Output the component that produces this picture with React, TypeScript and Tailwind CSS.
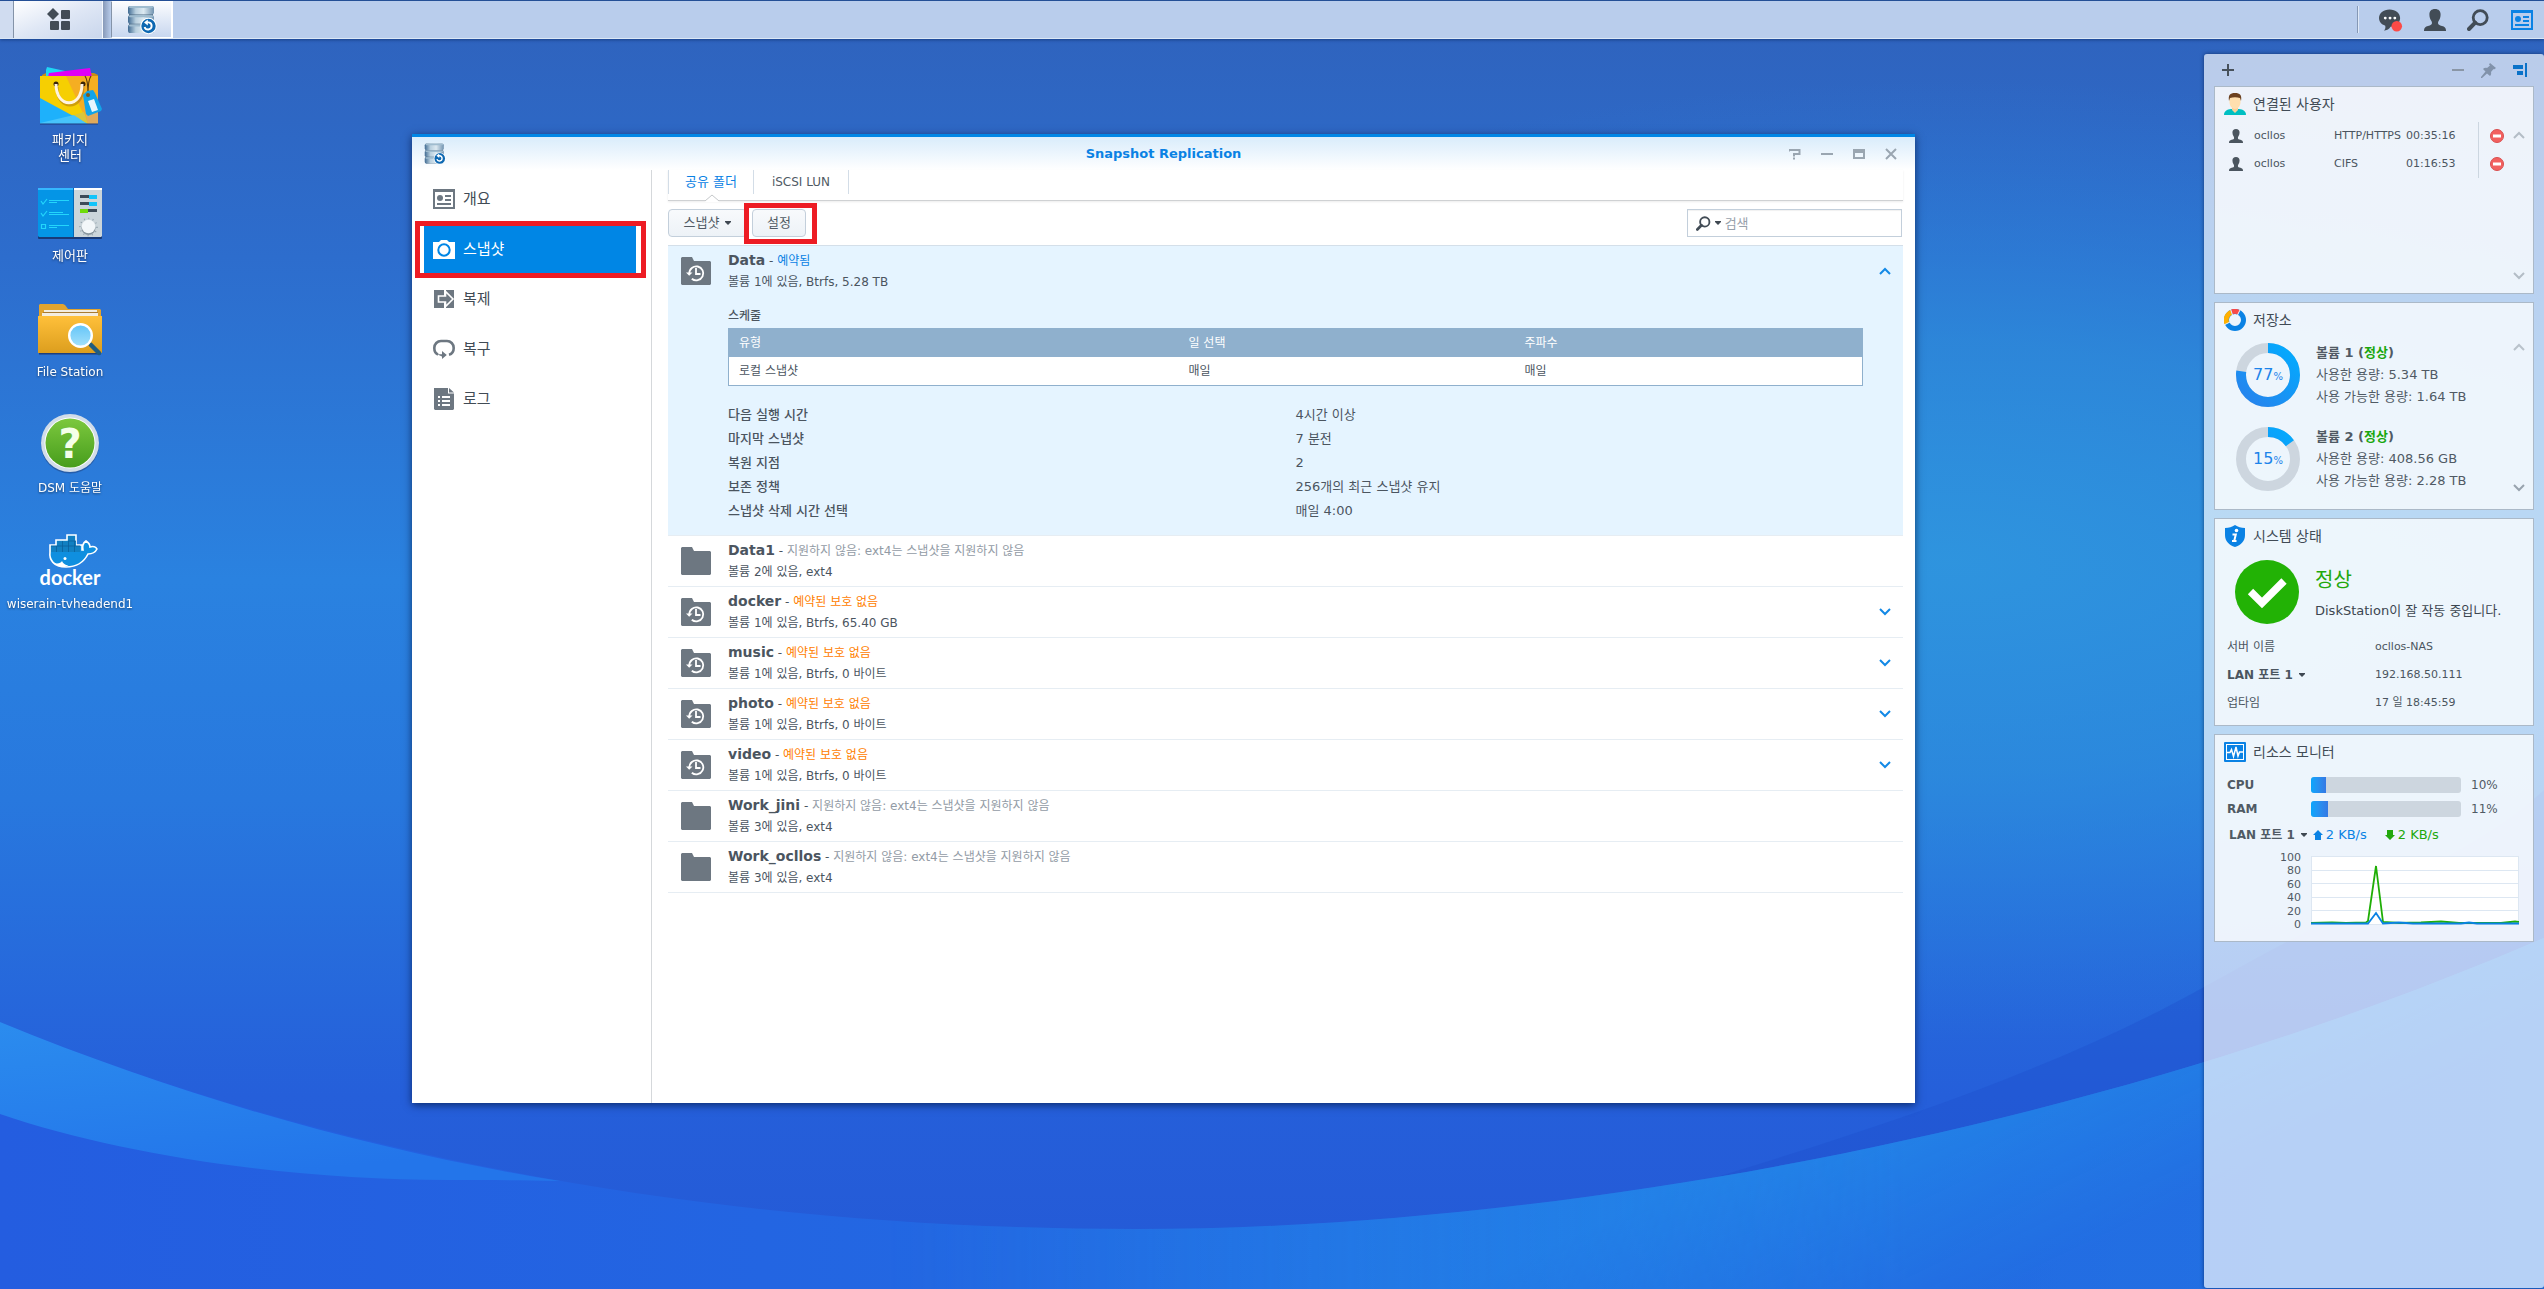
import React from "react";

type Row = {
  name: string;
  status: string;
  tone: "warn" | "muted";
  sub: string;
  snapshot: boolean;
};

const rows: Row[] = [
  { name: "Data1", status: "지원하지 않음: ext4는 스냅샷을 지원하지 않음", tone: "muted", sub: "볼륨 2에 있음, ext4", snapshot: false },
  { name: "docker", status: "예약된 보호 없음", tone: "warn", sub: "볼륨 1에 있음, Btrfs, 65.40 GB", snapshot: true },
  { name: "music", status: "예약된 보호 없음", tone: "warn", sub: "볼륨 1에 있음, Btrfs, 0 바이트", snapshot: true },
  { name: "photo", status: "예약된 보호 없음", tone: "warn", sub: "볼륨 1에 있음, Btrfs, 0 바이트", snapshot: true },
  { name: "video", status: "예약된 보호 없음", tone: "warn", sub: "볼륨 1에 있음, Btrfs, 0 바이트", snapshot: true },
  { name: "Work_jini", status: "지원하지 않음: ext4는 스냅샷을 지원하지 않음", tone: "muted", sub: "볼륨 3에 있음, ext4", snapshot: false },
  { name: "Work_ocllos", status: "지원하지 않음: ext4는 스냅샷을 지원하지 않음", tone: "muted", sub: "볼륨 3에 있음, ext4", snapshot: false },
];

const details = [
  ["다음 실행 시간", "4시간 이상"],
  ["마지막 스냅샷", "7 분전"],
  ["복원 지점", "2"],
  ["보존 정책", "256개의 최근 스냅샷 유지"],
  ["스냅샷 삭제 시간 선택", "매일 4:00"],
];

/* ---------- Wallpaper ---------- */

function Wallpaper() {
  return (
    <svg className="absolute inset-0 h-full w-full" viewBox="0 0 2544 1289" preserveAspectRatio="none" aria-hidden="true">
      <defs>
        <linearGradient id="sky" x1="0" y1="0" x2="0" y2="1">
          <stop offset="0" stopColor="#2f62bc" />
          <stop offset="0.2" stopColor="#2d6dcd" />
          <stop offset="0.45" stopColor="#2a82e0" />
          <stop offset="0.62" stopColor="#2878de" />
          <stop offset="0.85" stopColor="#255fda" />
          <stop offset="1" stopColor="#2459d6" />
        </linearGradient>
        <radialGradient id="glow" gradientUnits="userSpaceOnUse" cx="0" cy="0" r="1" gradientTransform="translate(1950 560) scale(1100 480)">
          <stop offset="0" stopColor="#2f96de" stopOpacity="0.9" />
          <stop offset="0.45" stopColor="#2d90dc" stopOpacity="0.65" />
          <stop offset="1" stopColor="#2a80de" stopOpacity="0" />
        </radialGradient>
        <linearGradient id="ground" x1="0" y1="0" x2="1" y2="0">
          <stop offset="0" stopColor="#245de0" />
          <stop offset="0.3" stopColor="#2365e2" />
          <stop offset="0.75" stopColor="#2273e4" />
          <stop offset="1" stopColor="#2688e8" />
        </linearGradient>
        <linearGradient id="groundFade" gradientUnits="userSpaceOnUse" x1="1900" y1="1080" x2="2000" y2="1289">
          <stop offset="0" stopColor="#2390ea" stopOpacity="0.7" />
          <stop offset="1" stopColor="#2266e0" stopOpacity="0.6" />
        </linearGradient>
        <linearGradient id="groundMask" x1="0" y1="0" x2="1" y2="0">
          <stop offset="0.35" stopColor="#000" />
          <stop offset="0.75" stopColor="#fff" />
        </linearGradient>
        <mask id="rightOnly">
          <rect width="2544" height="1289" fill="url(#groundMask)" />
        </mask>
        <linearGradient id="swoosh" x1="0" y1="0" x2="0.35" y2="1">
          <stop offset="0" stopColor="#2b8cee" />
          <stop offset="1" stopColor="#2375ea" />
        </linearGradient>
      </defs>
      <rect width="2544" height="1289" fill="url(#sky)" />
      <rect width="2544" height="1289" fill="url(#glow)" />
      <path d="M1500 1240 C1780 1160 2020 1090 2204 987 S2480 850 2544 790 V1289 H1500Z" fill="#1f50cc" fillOpacity="0.4" />
      <path d="M0 1022 C350 1165 740 1229 1136 1229 C1560 1229 2100 1130 2544 938 V1289 H0Z" fill="url(#ground)" />
      <path d="M0 1022 C350 1165 740 1229 1136 1229 C1560 1229 2100 1130 2544 938 V1289 H0Z" fill="url(#groundFade)" mask="url(#rightOnly)" />
      <path d="M0 1022 C190 1100 380 1152 560 1181 C520 1180 490 1180 450 1180 C290 1180 120 1155 0 1114Z" fill="url(#swoosh)" />
    </svg>
  );
}

/* ---------- Icons ---------- */

function SnapshotAppIcon({ className }: { className: string }) {
  return (
    <svg viewBox="0 0 30 30" className={className} aria-hidden="true">
      <defs>
        <linearGradient id="dbBody" x1="0" y1="0" x2="1" y2="0">
          <stop offset="0" stopColor="#3f6a92" />
          <stop offset="0.3" stopColor="#b9d0df" />
          <stop offset="0.6" stopColor="#dce9f1" />
          <stop offset="1" stopColor="#7193b0" />
        </linearGradient>
      </defs>
      <rect x="2" y="1" width="24" height="27" rx="1" fill="#4a6780" />
      {[1, 10.2, 19.4].map((y) => (
        <g key={y}>
          <rect x="1" y={y} width="26" height="8.600" rx="2" fill="url(#dbBody)" />
          <rect x="2" y={y} width="24" height="2" rx="1" fill="#9fbccf" />
        </g>
      ))}
      <circle cx="21.500" cy="21" r="8.200" fill="#fff" />
      <circle cx="21.500" cy="21" r="7.200" fill="#0d68b2" />
      <path d="M20 17.400h1.800a3.600 3.600 0 1 1-4.200 4.600" fill="none" stroke="#fff" strokeWidth="1.900" />
      <path d="M20.800 14.400v6L17 17.400z" fill="#fff" />
    </svg>
  );
}

function UserGlyph({ className }: { className: string }) {
  return (
    <svg viewBox="0 0 22 22" className={className} aria-hidden="true">
      <path d="M11 0c3.700 0 5.600 2.200 5.600 5.400 0 2.200-.6 4.400-1.700 6.100-.6 1-.9 1.700-.9 2.500 0 1.700 1.300 2.300 4 3 2.500.7 4 1.600 4 4.500V22H0v-.5c0-2.900 1.500-3.800 4-4.500 2.700-.7 4-1.300 4-3 0-.8-.3-1.500-.9-2.500C6 9.800 5.400 7.600 5.400 5.400 5.400 2.200 7.300 0 11 0z" fill="currentColor" />
    </svg>
  );
}

function SearchGlyph({ className }: { className: string }) {
  return (
    <svg viewBox="0 0 22 22" className={className} aria-hidden="true">
      <circle cx="13.200" cy="8.600" r="7" fill="none" stroke="currentColor" strokeWidth="2.800" />
      <path d="M8.200 13.700 2 20" stroke="currentColor" strokeWidth="4" strokeLinecap="round" />
    </svg>
  );
}

function CardGlyph({ className }: { className: string }) {
  return (
    <svg viewBox="0 0 22 20" className={className} aria-hidden="true">
      <path fillRule="evenodd" d="M0 0h22v20H0zM2 3v15h18V3z" fill="currentColor" />
      <circle cx="7" cy="9" r="3" fill="currentColor" />
      <path d="M12 6h6v2h-6zM12 10h6v2h-6zM4 14h14v2H4z" fill="currentColor" />
    </svg>
  );
}

function Caret() {
  return (
    <svg viewBox="0 0 6 4" className="h-1 w-1.5 shrink-0" aria-hidden="true">
      <path d="M0 0h6v1L3 4 0 1z" fill="#3f4852" />
    </svg>
  );
}

function Chevron({ up, className }: { up?: boolean; className: string }) {
  return (
    <svg viewBox="0 0 12 8" className={className} aria-hidden="true">
      <path d={up ? "M1 7 6 2l5 5" : "M1 1l5 5 5-5"} fill="none" stroke="currentColor" strokeWidth="2" />
    </svg>
  );
}

function FolderGlyph({ snapshot }: { snapshot: boolean }) {
  return (
    <svg viewBox="0 0 30 28" className="mt-[11px] h-7 w-[30px] shrink-0" aria-hidden="true">
      <path d="M1 0h10l2 4h16l1 1v22l-1 1H1l-1-1V1z" fill="#6d7781" />
      {snapshot && (
        <g fill="none" stroke="#fff" strokeWidth="1.800">
          <path d="M8.300 16.500a7 7 0 1 1 2.500 5.200" />
          <path d="M15 11v6h4.500" />
          <path d="M5 15.500h6.500L8.200 18.700z" fill="#fff" stroke="none" />
        </g>
      )}
    </svg>
  );
}

function BagIcon() {
  return (
    <svg viewBox="0 0 64 64" className="h-16 w-16" aria-hidden="true">
      <path d="M4 9l4-2h48l4 2v3H4z" fill="#c98d16" />
      <path d="M8 4 9 1l18 4v7H8z" fill="#1fd6f5" />
      <path d="M11 7 52 2l2 9H10z" fill="#e000f5" />
      <path d="M2 10h58v48H2z" fill="#f6cf02" />
      <path d="M28 10h32v48H50z" fill="#f5ae22" />
      <path d="M2 32l48 26H2z" fill="#1eb1fb" />
      <path d="M2 57l34-8 14 9H2z" fill="#47c4fb" />
      <path d="M36 49l10-3 4 12z" fill="#d8c63c" />
      <path d="M46 40l14-8v26H50z" fill="#e0aa5c" />
      <circle cx="18" cy="18" r="2.500" fill="#3a2408" />
      <circle cx="45" cy="18" r="2.500" fill="#3a2408" />
      <path d="M18 19c0 24 26 24 26 0" fill="none" stroke="#a5700e" strokeWidth="3" strokeOpacity="0.500" transform="translate(1 2)" />
      <path d="M18 18c0 25 26 25 26 0" fill="none" stroke="#fff3e0" strokeWidth="3" />
      <path d="M47 10c3 4 3 12 3 18M53 10c-3 4-3 12-3 18" fill="none" stroke="#5b3d0c" strokeWidth="1.200" />
      <path d="M45 29l4-4 6-1 2 3 7 16-1 2-13 5-2-2z" fill="#12a4e8" />
      <circle cx="50" cy="29" r="2" fill="#7d5a1c" />
      <path d="M50 35l6-2 4 11-6 2z" fill="#fff" fillOpacity="0.900" />
      <path d="M2 58h58" stroke="#1c3d80" strokeWidth="1" />
    </svg>
  );
}

function ControlPanelIcon() {
  return (
    <svg viewBox="0 0 64 64" className="h-16 w-16" aria-hidden="true">
      <rect x="0" y="6" width="64" height="51" rx="1" fill="#183a78" />
      <path d="M0 6h36v49H1l-1-1z" fill="#0495e6" />
      <path d="M0 6h36v2H0z" fill="#35b7ff" />
      <path d="M36 6h28v48l-1 1H36z" fill="#cbd5da" />
      <path d="M36 6h28v2H36z" fill="#fff" />
      <path d="M35 6h1v49h-1z" fill="#0468b8" />
      <g fill="none" stroke="#23d5fb" strokeWidth="1.200">
        <path d="M3 19l2 3 4-5M3 31l2 3 4-5M3.500 42.500h4v4h-4zM11 18.500h20M11 20.500h8M11 30.500h14M11 32.500h20M11 43.500h20M11 45.500h8" />
      </g>
      <path d="M42 13h10v3H42zM42 20h10v3H42zM50 27h9v3h-9z" fill="#3d4b58" />
      <path d="M51 13h8v4h-8zM51 20h8v4h-8z" fill="#12c4fa" />
      <path d="M42 27h8v4h-8z" fill="#6edc0a" />
      <circle cx="50.500" cy="45" r="8.500" fill="none" stroke="#94a2ac" strokeWidth="1.500" strokeDasharray="1 3.400" />
      <circle cx="50.500" cy="46" r="7" fill="#8a979f" />
      <circle cx="50.500" cy="44.500" r="6.800" fill="#f3f7f9" />
    </svg>
  );
}

function FileStationIcon() {
  return (
    <svg viewBox="0 0 64 64" className="h-16 w-16" aria-hidden="true">
      <defs>
        <linearGradient id="folderFront" x1="0" y1="0" x2="0" y2="1">
          <stop offset="0" stopColor="#ffc03a" />
          <stop offset="1" stopColor="#dc9e1e" />
        </linearGradient>
        <linearGradient id="lens" x1="0" y1="0" x2="0" y2="1">
          <stop offset="0" stopColor="#62c4f8" />
          <stop offset="1" stopColor="#a4e1fb" />
        </linearGradient>
      </defs>
      <path d="M1 7l1-1h23l2 1 3 4h32l1 1v12H1z" fill="#e2a42e" />
      <path d="M6 12h53v2H6zM4 15h56v3H4z" fill="#f3ecdf" />
      <path d="M5 14h55v1H5z" fill="#a77b33" />
      <path d="M0 18h64v37H0z" fill="url(#folderFront)" />
      <path d="M1 55h62v1.500H1z" fill="#1e3f7c" />
      <path d="M53 47l8 8" stroke="#205c80" strokeWidth="4.500" strokeLinecap="round" />
      <circle cx="42.500" cy="37.500" r="11.300" fill="url(#lens)" stroke="#fff" strokeWidth="2.400" />
    </svg>
  );
}

function HelpIcon() {
  return (
    <svg viewBox="0 0 64 64" className="h-16 w-16" aria-hidden="true">
      <defs>
        <linearGradient id="helpFill" x1="0" y1="0" x2="0" y2="1">
          <stop offset="0" stopColor="#7cc83e" />
          <stop offset="1" stopColor="#479d1c" />
        </linearGradient>
      </defs>
      <circle cx="32" cy="30.500" r="29" fill="#1f3f7a" fillOpacity="0.500" />
      <circle cx="32" cy="29" r="29" fill="#d2dde9" />
      <circle cx="32" cy="29" r="25.500" fill="#fff" />
      <circle cx="32" cy="29" r="24.500" fill="url(#helpFill)" />
      <text x="32" y="44" textAnchor="middle" fontSize="40" fontWeight="700" fill="#f4ffe9" className="font-['DejaVu_Sans',sans-serif]">?</text>
    </svg>
  );
}

function DockerIcon() {
  return (
    <svg viewBox="0 0 64 64" className="h-16 w-16" aria-hidden="true">
      <path d="M12 22v-7h6v-5h11V5h9v10h6v5h1c-1-4 0-7 3-9 3 2 4 4 4 6 3-1 6 0 7 2-2 4-5 5-9 5-4 8-11 13-22 13-13 0-17-8-16-15z" fill="#0f8fdf" stroke="#fff" strokeWidth="1.600" />
      <path d="M13 16h29v6H13zM19 11h19v6H19zM30 6h7v6h-7z" fill="#1180c2" />
      <path d="M18.500 16v6M24.500 11v11M30.500 11v11M36.500 11v11M13 16h29M30 11h8" stroke="#0a619c" strokeWidth="0.800" />
      <circle cx="27" cy="28.500" r="1.500" fill="#fff" />
      <path d="M16 33c4 1 7 0 8-2 1 3 5 5 7 4-4 3-11 3-15-2z" fill="#fff" />
      <text x="32" y="55" textAnchor="middle" fontSize="20" fontWeight="700" fill="#fff" className="font-['Lato',sans-serif]">docker</text>
    </svg>
  );
}

/* ---------- Taskbar ---------- */

function Taskbar() {
  return (
    <header className="relative flex h-[39px] shrink-0 items-stretch border-t border-[#244f96] border-b border-b-[#dbe7f5] bg-[#b9cdec] text-[#424c56] shadow-[0_1px_3px_rgba(10,40,100,0.6)]">
      <div className="w-[13px] bg-[#d0dcf0]" />
      <button aria-label="주 메뉴" className="flex w-[90px] items-center justify-center border-x border-l-[#8493a8] border-r-[#f4f8fd] bg-gradient-to-br from-white via-[#dfe7f5] to-[#c9d6ec]">
        <svg viewBox="0 0 23 23" className="h-[23px] w-[23px]" aria-hidden="true">
          <path d="M6 0 12 6 6 12 0 6z" fill="currentColor" />
          <rect x="14" y="2" width="9" height="9" rx="1" fill="currentColor" />
          <rect x="3" y="13" width="9" height="9" rx="1" fill="currentColor" />
          <rect x="14" y="13" width="9" height="9" rx="1" fill="currentColor" />
        </svg>
      </button>
      <div className="w-2 bg-gradient-to-r from-[#8799b8] to-[#b9cdec]" />
      <button aria-label="Snapshot Replication" className="flex w-[62px] items-center justify-center border border-white border-l-[#8493a8] border-r-2 bg-gradient-to-b from-[#fbfcfe] to-[#c8d7ef]">
        <SnapshotAppIcon className="h-[30px] w-[30px]" />
      </button>
      <div className="flex-1" />
      <div className="my-[5px] mr-5 w-0.5 border-l border-[#8598b5] bg-[#dfe9f7]" />
      <nav className="flex items-center gap-[21px] pr-2.5">
        <button aria-label="알림">
          <svg viewBox="0 0 25 24" className="h-6 w-6" aria-hidden="true">
            <path d="M11 1c6.500 0 11 4 11 9s-4.500 9-10 9c-1 2-4 4-7 4 1.500-1 2-3 1.500-5C2.500 16.500 0 14 0 10c0-5 4.500-9 11-9z" fill="currentColor" />
            <circle cx="6.500" cy="10" r="1.500" fill="#fff" />
            <circle cx="11.500" cy="10" r="1.500" fill="#fff" />
            <circle cx="16.500" cy="10" r="1.500" fill="#fff" />
            <circle cx="18.500" cy="18.500" r="5.500" fill="#fb4a47" />
          </svg>
        </button>
        <button aria-label="옵션"><UserGlyph className="h-[22px] w-[22px]" /></button>
        <button aria-label="검색"><SearchGlyph className="h-[22px] w-[22px]" /></button>
        <button aria-label="위젯" className="text-[#0a82e4]"><CardGlyph className="h-5 w-6" /></button>
      </nav>
    </header>
  );
}

/* ---------- Desktop shortcuts ---------- */

function Shortcut({ icon, size, children }: { icon: React.ReactNode; size: string; children: React.ReactNode }) {
  return (
    <button className="flex h-[116px] w-[140px] flex-col items-center">
      {icon}
      <span className={`mt-0.5 block leading-4 whitespace-nowrap text-white drop-shadow-[0_1px_1px_rgba(0,0,0,0.5)] ${size}`}>{children}</span>
    </button>
  );
}

function Shortcuts() {
  return (
    <nav aria-label="바탕 화면" className="w-[140px] shrink-0 pt-[27px]">
      <Shortcut icon={<BagIcon />} size="text-[13px]">패키지<br />센터</Shortcut>
      <Shortcut icon={<ControlPanelIcon />} size="text-[13px]">제어판</Shortcut>
      <Shortcut icon={<FileStationIcon />} size="text-xs">File Station</Shortcut>
      <Shortcut icon={<HelpIcon />} size="text-xs">DSM 도움말</Shortcut>
      <Shortcut icon={<DockerIcon />} size="text-xs">wiserain-tvheadend1</Shortcut>
    </nav>
  );
}

/* ---------- Application window ---------- */

function TitleBar() {
  return (
    <header className="grid h-[33px] shrink-0 grid-cols-[1fr_auto_1fr] items-center bg-gradient-to-b from-[#d9ecfb] to-white">
      <SnapshotAppIcon className="ml-3 h-[22px] w-[22px]" />
      <h1 className="text-[13px] leading-5 font-bold text-[#0a82e4]">Snapshot Replication</h1>
      <div className="flex items-center justify-end gap-5 pr-[18px] text-[#9aa6b1]">
        <button aria-label="도움말">
          <svg viewBox="0 0 12 12" className="h-3 w-3" aria-hidden="true">
            <path d="M0 3.500V2h10.500v4H5v2.500M5 9.500v2" fill="none" stroke="currentColor" strokeWidth="2" />
          </svg>
        </button>
        <button aria-label="최소화">
          <svg viewBox="0 0 12 12" className="h-3 w-3" aria-hidden="true"><path d="M0 5h12v2H0z" fill="currentColor" /></svg>
        </button>
        <button aria-label="최대화">
          <svg viewBox="0 0 12 12" className="h-3 w-3" aria-hidden="true"><path fillRule="evenodd" d="M0 1h12v10H0zM2 5v4h8V5z" fill="currentColor" /></svg>
        </button>
        <button aria-label="닫기">
          <svg viewBox="0 0 12 12" className="h-3 w-3" aria-hidden="true"><path d="M1 1l10 10M11 1 1 11" stroke="currentColor" strokeWidth="2" /></svg>
        </button>
      </div>
    </header>
  );
}

function SideItem({ icon, label, active }: { icon: React.ReactNode; label: string; active?: boolean }) {
  return (
    <li className="relative">
      <button
        className={
          active
            ? "flex h-[50px] w-full items-center gap-2 bg-[#0086e5] pl-[9px] text-[15px] leading-5 text-white"
            : "flex h-[50px] w-full items-center gap-2 pl-[9px] text-[15px] leading-5 text-[#414b55]"
        }
      >
        <span className={active ? "text-white" : "text-[#6d7781]"}>{icon}</span>
        {label}
      </button>
      {active && <div className="pointer-events-none absolute -top-[3px] -right-[10px] -bottom-1 -left-[9px] z-10 border-[5px] border-[#ed1c24]" />}
    </li>
  );
}

function SideNav() {
  return (
    <ul className="w-[240px] shrink-0 border-r border-[#d5d8db] pt-1 pr-[15px] pl-3">
      <SideItem label="개요" icon={<CardGlyph className="h-5 w-[22px]" />} />
      <SideItem
        active
        label="스냅샷"
        icon={
          <svg viewBox="0 0 22 19" className="h-[19px] w-[22px]" aria-hidden="true">
            <path d="M0 2h6l2-2h6l2 2h6v17H0z" fill="currentColor" />
            <circle cx="11" cy="10" r="5.700" fill="none" stroke="#0086e5" strokeWidth="2" />
          </svg>
        }
      />
      <SideItem
        label="복제"
        icon={
          <svg viewBox="0 0 22 20" className="h-5 w-[22px]" aria-hidden="true">
            <path d="M1 1h10v18H1zM13 1h8v18h-8z" fill="currentColor" />
            <path d="M5.500 7h7V2.500L20 10l-7.500 7.500V13h-7z" fill="currentColor" stroke="#fff" strokeWidth="1.600" />
          </svg>
        }
      />
      <SideItem
        label="복구"
        icon={
          <svg viewBox="0 0 22 20" className="h-5 w-[22px]" aria-hidden="true">
            <path d="M5 15.500C2.500 14.500 1.300 12 1.300 9c0-4 3-7 6.700-7h6c3.700 0 6.700 3 6.700 7 0 3.500-2 6-4.700 6.700" fill="none" stroke="currentColor" strokeWidth="2.600" />
            <path d="M4 15.300h5V12l4.800 4L9 20v-2.500z" fill="currentColor" />
          </svg>
        }
      />
      <SideItem
        label="로그"
        icon={
          <svg viewBox="0 0 22 22" className="h-[22px] w-[22px]" aria-hidden="true">
            <path d="M1 0h14v5.500h6V21l-1 1H2l-1-1z" fill="currentColor" />
            <path d="M16 0l5 4.500h-5z" fill="currentColor" />
            <path d="M5 8h2v2H5zM9 8h8v2H9zM5 12h2v2H5zM9 12h8v2H9zM5 16h2v2H5zM9 16h8v2H9z" fill="#fff" />
          </svg>
        }
      />
    </ul>
  );
}

function Tabs() {
  return (
    <div role="tablist" className="flex h-[31px] items-start border-b border-[#cfd1d3] shadow-[0_1px_2px_rgba(0,0,0,0.08)]">
      <button role="tab" aria-selected="true" className="relative h-6 w-[85px] border-l border-[#d3dde7] text-[13px] leading-6 text-[#0a82e4]">
        공유 폴더
        <svg viewBox="0 0 14 8" className="absolute top-6 left-9 h-2 w-3.5" aria-hidden="true">
          <path d="M0 7 7 1l7 6v1H0z" fill="#fff" />
          <path d="M0 7 7 1l7 6" fill="none" stroke="#c4c7ca" />
        </svg>
      </button>
      <button role="tab" aria-selected="false" className="h-6 w-[96px] border-x border-[#d3dde7] text-xs leading-6 text-[#505a64]">iSCSI LUN</button>
    </div>
  );
}

function Toolbar() {
  return (
    <div className="flex h-[45px] items-center gap-[5px] border-b border-[#d4dfe9] pr-px text-[13px] text-[#505a64]">
      <button className="flex h-7 w-[79px] items-center justify-center gap-1.5 rounded-sm border border-[#c3cfdb] bg-gradient-to-b from-[#f8fafc] to-[#edf2f7]">
        스냅샷
        <Caret />
      </button>
      <div className="relative">
        <button className="h-7 w-[54px] rounded-sm border border-[#c3cfdb] bg-gradient-to-b from-[#f8fafc] to-[#edf2f7]">설정</button>
        <div className="pointer-events-none absolute -top-1.5 -right-[11px] -bottom-[7px] -left-2 border-[5px] border-[#ed1c24]" />
      </div>
      <label className="ml-auto flex h-7 w-[215px] items-center gap-1 border border-[#c3cfdb] bg-white pl-2 shadow-[inset_0_1px_1px_rgba(0,0,0,0.06)]">
        <SearchGlyph className="h-[17px] w-[17px] text-[#424c56]" />
        <Caret />
        <input aria-label="검색" placeholder="검색" className="h-6 w-full min-w-0 bg-transparent text-[13px] outline-none placeholder:text-[#97a1ab]" />
      </label>
    </div>
  );
}

function DataRow() {
  return (
    <li className="flex bg-[#e5f4ff] pr-10 pl-[13px]">
      <FolderGlyph snapshot />
      <div className="ml-[17px] min-w-0 flex-1 pt-1 pb-3">
        <div className="flex items-start justify-between">
          <div>
            <h2 className="text-sm leading-5 font-bold">
              Data<span className="text-xs font-normal"> - <span className="text-[#0a82e4]">예약됨</span></span>
            </h2>
            <p className="mt-0.5 text-xs leading-5">볼륨 1에 있음, Btrfs, 5.28 TB</p>
          </div>
          <button aria-label="접기" className="mt-[17px] -mr-7 text-[#1389e6]"><Chevron up className="h-2 w-3" /></button>
        </div>
        <h3 className="mt-3.5 text-xs leading-5 font-medium">스케줄</h3>
        <table className="mt-0.5 w-full table-fixed border border-[#8fb0cd] bg-white text-left text-xs">
          <thead className="bg-[#8fb0cd] text-white">
            <tr className="h-7">
              <th className="w-[450px] pl-2.5 font-normal">유형</th>
              <th className="w-[336px] pl-2.5 font-normal">일 선택</th>
              <th className="pl-2.5 font-normal">주파수</th>
            </tr>
          </thead>
          <tbody>
            <tr className="h-[29px]">
              <td className="pl-2.5">로컬 스냅샷</td>
              <td className="pl-2.5">매일</td>
              <td className="pl-2.5">매일</td>
            </tr>
          </tbody>
        </table>
        <dl className="mt-[17px] text-[13px] leading-6">
          {details.map(([k, v]) => (
            <div key={k} className="grid grid-cols-2">
              <dt className="font-medium">{k}</dt>
              <dd>{v}</dd>
            </div>
          ))}
        </dl>
      </div>
    </li>
  );
}

function FolderRow({ row }: { row: Row }) {
  return (
    <li className="flex border-t border-[#e6edf3] pr-3 pl-[13px]">
      <FolderGlyph snapshot={row.snapshot} />
      <div className="ml-[17px] h-[50px] flex-1 pt-1">
        <h2 className="text-sm leading-5 font-bold">
          {row.name}
          <span className="text-xs font-normal"> - <span className={row.tone === "warn" ? "text-[#ff8000]" : "text-[#929ba5]"}>{row.status}</span></span>
        </h2>
        <p className="mt-0.5 text-xs leading-5">{row.sub}</p>
      </div>
      {row.snapshot && (
        <button aria-label="펼치기" className="text-[#1389e6]"><Chevron className="h-2 w-3" /></button>
      )}
    </li>
  );
}

function AppWindow() {
  return (
    <main className="mt-[95px] mr-[289px] mb-[186px] ml-[272px] flex min-w-0 flex-1 flex-col border-t-[3px] border-[#0086e5] bg-white text-[#4b555f] shadow-[0_2px_8px_rgba(0,20,60,0.7)]">
      <TitleBar />
      <div className="flex min-h-0 flex-1">
        <SideNav />
        <section className="min-w-0 flex-1 pr-3 pl-4">
          <Tabs />
          <Toolbar />
          <ul className="border-b border-[#e6edf3]">
            <DataRow />
            {rows.map((r) => (
              <FolderRow key={r.name} row={r} />
            ))}
          </ul>
        </section>
      </div>
    </main>
  );
}

/* ---------- Widgets ---------- */

function Widget({ icon, title, children }: { icon: React.ReactNode; title: string; children: React.ReactNode }) {
  return (
    <section className="flex h-[208px] flex-col border border-[#abb9c8] bg-white/75">
      <h2 className="flex h-[34px] shrink-0 items-center gap-[7px] pl-[9px] text-sm leading-5 text-[#414b55]">
        {icon}
        {title}
      </h2>
      {children}
    </section>
  );
}

function UsersWidget() {
  const users = [
    ["HTTP/HTTPS", "00:35:16"],
    ["CIFS", "01:16:53"],
  ];
  return (
    <Widget
      title="연결된 사용자"
      icon={
        <svg viewBox="0 0 22 22" className="h-[22px] w-[22px]" aria-hidden="true">
          <path d="M0 22c0-4 3-5.500 7-6h8c4 .5 7 2 7 6z" fill="#00bfc2" />
          <path d="M8 13h6v4l-3 3-3-3z" fill="#f8cf98" />
          <path d="M5.500 5c0-3 2-4 5.500-4s5.500 1 5.500 4v4c0 4-2.500 7-5.500 7s-5.500-3-5.500-7z" fill="#ffdfae" />
          <path d="M5 8C4 2 6 0 11 0s7 2 6 8l-1-3c-3-1-7-1-10 0z" fill="#6d4220" />
        </svg>
      }
    >
      <div className="flex flex-1 text-[11px] text-[#4b555f]">
        <ul className="mt-px h-14 w-[264px] border-r border-[#ccd6e0]">
          {users.map(([proto, time]) => (
            <li key={proto} className="flex h-7 items-center">
              <UserGlyph className="ml-3.5 h-3.5 w-3.5" />
              <span className="ml-[11px] w-20">ocllos</span>
              <span className="w-[72px]">{proto}</span>
              <span>{time}</span>
            </li>
          ))}
        </ul>
        <div className="mt-px ml-[11px]">
          {users.map(([proto]) => (
            <button key={proto} aria-label="연결 끊기" className="flex h-7 items-center">
              <svg viewBox="0 0 14 14" className="h-3.5 w-3.5" aria-hidden="true">
                <circle cx="7" cy="7" r="6.500" fill="#f2605f" stroke="#d94f4f" />
                <path d="M3 5.500h8v3H3z" fill="#fff" />
              </svg>
            </button>
          ))}
        </div>
        <div className="ml-[9px] flex flex-col justify-between pt-[10px] pb-[13px] text-[#b4bdc6]">
          <Chevron up className="h-2 w-3" />
          <Chevron className="h-2 w-3" />
        </div>
      </div>
    </Widget>
  );
}

function Donut({ value }: { value: number }) {
  const c = 2 * Math.PI * 27;
  return (
    <div className="relative h-16 w-16 shrink-0">
      <svg viewBox="0 0 64 64" className="h-16 w-16 -rotate-90" aria-hidden="true">
        <defs>
          <linearGradient id="ring" gradientUnits="userSpaceOnUse" x1="54" y1="54" x2="8" y2="14">
            <stop offset="0" stopColor="#05a8fd" />
            <stop offset="1" stopColor="#2486ee" />
          </linearGradient>
        </defs>
        <circle cx="32" cy="32" r="27" fill="none" stroke="#cdd6df" strokeWidth="10" />
        <circle cx="32" cy="32" r="27" fill="none" stroke="url(#ring)" strokeWidth="10" strokeDasharray={`${(c * value) / 100} ${c}`} />
      </svg>
      <div className="absolute inset-0 flex items-center justify-center text-base text-[#1c84ea]">
        <span>
          {value}
          <span className="text-[10px]">%</span>
        </span>
      </div>
    </div>
  );
}

function StorageWidget() {
  const volumes = [
    { name: "볼륨 1", pct: 77, used: "5.34 TB", free: "1.64 TB" },
    { name: "볼륨 2", pct: 15, used: "408.56 GB", free: "2.28 TB" },
  ];
  return (
    <Widget
      title="저장소"
      icon={
        <svg viewBox="0 0 22 22" className="h-[22px] w-[22px]" fill="none" strokeWidth="5" aria-hidden="true">
          <circle cx="11" cy="11" r="8.500" stroke="#0a82e4" />
          <path d="M2.900 14.500A8.500 8.500 0 0 1 7.500 3.200" stroke="#ffb000" />
          <path d="M7.700 3A8.500 8.500 0 0 1 15 3.500" stroke="#fb4a47" />
          <path d="M6.500 0l2 6M16.500 0l-3 6M0 16l6-3" stroke="#ecf5fd" strokeWidth="1" />
        </svg>
      }
    >
      <div className="flex flex-1">
        <div className="flex w-[298px] flex-col gap-[18px] pt-[5px] pl-[21px]">
          {volumes.map((v) => (
            <div key={v.name} className="flex items-center gap-4 text-[13px] leading-[22px] text-[#505a64]">
              <Donut value={v.pct} />
              <div>
                <p className="font-bold">{v.name} (<span className="text-[#1aa70e]">정상</span>)</p>
                <p>사용한 용량: {v.used}</p>
                <p>사용 가능한 용량: {v.free}</p>
              </div>
            </div>
          ))}
        </div>
        <div className="flex flex-col justify-between pt-[6px] pb-[17px]">
          <Chevron up className="h-2 w-3 text-[#b9c2cb]" />
          <Chevron className="h-2 w-3 text-[#98a3ae]" />
        </div>
      </div>
    </Widget>
  );
}

function HealthWidget() {
  return (
    <Widget
      title="시스템 상태"
      icon={
        <svg viewBox="0 0 22 22" className="h-[22px] w-[22px]" aria-hidden="true">
          <path d="M11 0c3 2 6 3 10 3v7c0 6-4 10-10 12C5 20 1 16 1 10V3c4 0 7-1 10-3z" fill="#0a82e4" />
          <circle cx="12.500" cy="5.500" r="1.800" fill="#fff" />
          <path d="M8.500 9.500h3.300L10.200 16h2.300M8 16h3" fill="none" stroke="#fff" strokeWidth="2" />
        </svg>
      }
    >
      <div className="flex items-start gap-4 pt-[7px] pl-5">
        <svg viewBox="0 0 64 64" className="h-16 w-16 shrink-0" aria-hidden="true">
          <circle cx="32" cy="32" r="32" fill="#22b205" />
          <path d="M15.500 31.500 27 43 49 21" fill="none" stroke="#fff" strokeWidth="7.500" />
        </svg>
        <div className="pt-1.5">
          <p className="text-xl leading-7 text-[#22a80c]">정상</p>
          <p className="mt-[5px] text-[13px] leading-6 text-[#3c4650]">DiskStation이 잘 작동 중입니다.</p>
        </div>
      </div>
      <dl className="mt-[9px] grid grid-cols-[148px_1fr] pl-3 text-[11px] leading-7 text-[#4b555f]">
        <dt className="text-xs leading-7">서버 이름</dt>
        <dd>ocllos-NAS</dd>
        <dt className="flex items-center gap-1.5 text-xs leading-7 font-bold">LAN 포트 1<Caret /></dt>
        <dd>192.168.50.111</dd>
        <dt className="text-xs leading-7">업타임</dt>
        <dd>17 일 18:45:59</dd>
      </dl>
    </Widget>
  );
}

function Meter({ label, value }: { label: string; value: number }) {
  return (
    <div className="flex h-6 items-center text-xs">
      <span className="w-[84px] font-bold">{label}</span>
      <div className="h-4 w-[150px] overflow-hidden rounded-[3px] bg-[#cdd6df]">
        <div className="h-full bg-gradient-to-r from-[#05a6fc] to-[#3479e4]" style={{ width: `${value}%` }} />
      </div>
      <span className="ml-2.5">{value}%</span>
    </div>
  );
}

function ResourceWidget() {
  return (
    <Widget
      title="리소스 모니터"
      icon={
        <svg viewBox="0 0 22 20" className="h-5 w-[22px]" aria-hidden="true">
          <rect width="22" height="20" rx="1" fill="#0a82e4" />
          <rect x="2.500" y="2.500" width="17" height="15" fill="none" stroke="#fff" />
          <path d="M3 10.500h3l1.500-3 2 7L12 5l2 9 1.500-4H19" fill="none" stroke="#fff" strokeWidth="1.500" />
        </svg>
      }
    >
      <div className="mt-1 pl-3 text-[#505a64]">
        <Meter label="CPU" value={10} />
        <Meter label="RAM" value={11} />
        <div className="flex h-7 items-center pl-0.5 text-xs">
          <span className="mr-1.5 font-bold">LAN 포트 1</span>
          <Caret />
          <svg viewBox="0 0 10 10" className="mr-[3px] ml-1.5 h-2.5 w-2.5" aria-hidden="true"><path d="M5 0l5 5H8v5H2V5H0z" fill="#0a82e4" /></svg>
          <span className="w-[59px] text-[13px] text-[#0a82e4]">2 KB/s</span>
          <svg viewBox="0 0 10 10" className="mr-[3px] h-2.5 w-2.5" aria-hidden="true"><path d="M5 10l5-5H8V0H2v5H0z" fill="#22a80c" /></svg>
          <span className="text-[13px] text-[#22a80c]">2 KB/s</span>
        </div>
        <div className="flex items-center pt-0.5">
          <div className="flex h-20 w-[74px] flex-col justify-between text-right text-[11px] leading-[13px]">
            {[100, 80, 60, 40, 20, 0].map((n) => (
              <span key={n}>{n}</span>
            ))}
          </div>
          <svg viewBox="0 0 208 70" className="ml-2.5 h-[70px] w-[208px]" aria-hidden="true">
            <rect x="0.500" y="0.500" width="207" height="68" fill="#fff" stroke="#dde7f2" />
            <path d="M0 14.500h208M0 27.500h208M0 41.500h208M0 54.500h208" stroke="#dde7f2" />
            <path d="M0 67l21-.5 14 .5 20-.5 2-1.500L65 10l7 56 16 1 22-.5 20-1 18 1.500h42l14-1.500 14 1" fill="none" stroke="#1fae06" strokeWidth="1.800" />
            <path d="M0 67.500h57L65 57l7 10.500 16-1 14 1h48l8-1 8 1h42" fill="none" stroke="#0a82e4" strokeWidth="1.800" />
          </svg>
        </div>
      </div>
    </Widget>
  );
}

function WidgetPanel() {
  return (
    <aside className="mt-[15px] mb-px w-[340px] shrink-0 rounded-[3px] bg-white/[0.67] px-2.5 shadow-[0_0_4px_rgba(0,20,60,0.6)]">
      <div className="flex h-8 items-center gap-[17px] pr-[7px] pl-2">
        <button aria-label="추가" className="mr-auto text-[#47515b]">
          <svg viewBox="0 0 12 12" className="h-3 w-3" aria-hidden="true"><path d="M5 0h2v5h5v2H7v5H5V7H0V5h5z" fill="currentColor" /></svg>
        </button>
        <button aria-label="최소화" className="text-[#8a96a6]">
          <svg viewBox="0 0 12 12" className="h-3 w-3" aria-hidden="true"><path d="M0 5h12v2H0z" fill="currentColor" /></svg>
        </button>
        <button aria-label="고정" className="text-[#8192aa]">
          <svg viewBox="0 0 15 15" className="h-[15px] w-[15px]" aria-hidden="true"><path d="M9 0l6 5-2 1.500-.5-.5-2.500 3c.5 1.500 0 3-1 4L6 10.500 1 15H0v-1l4.500-5.500L2 6c1-1 2.500-1.500 4-1L9 2.500 8 1.500z" fill="currentColor" /></svg>
        </button>
        <button aria-label="도킹" className="text-[#0a72c8]">
          <svg viewBox="0 0 14 14" className="h-3.5 w-3.5" aria-hidden="true"><path d="M0 2h10v4H0zM4 8h6v4H4zM12 0h2v14h-2z" fill="currentColor" /></svg>
        </button>
      </div>
      <div className="flex flex-col gap-2">
        <UsersWidget />
        <StorageWidget />
        <HealthWidget />
        <ResourceWidget />
      </div>
    </aside>
  );
}

export default function App() {
  return (
    <div className="relative flex min-h-screen w-full flex-col overflow-hidden bg-[#2970d6] font-['DejaVu_Sans','Noto_Sans_CJK_KR',sans-serif]">
      <Wallpaper />
      <Taskbar />
      <div className="relative flex flex-1">
        <Shortcuts />
        <AppWindow />
        <WidgetPanel />
      </div>
    </div>
  );
}
